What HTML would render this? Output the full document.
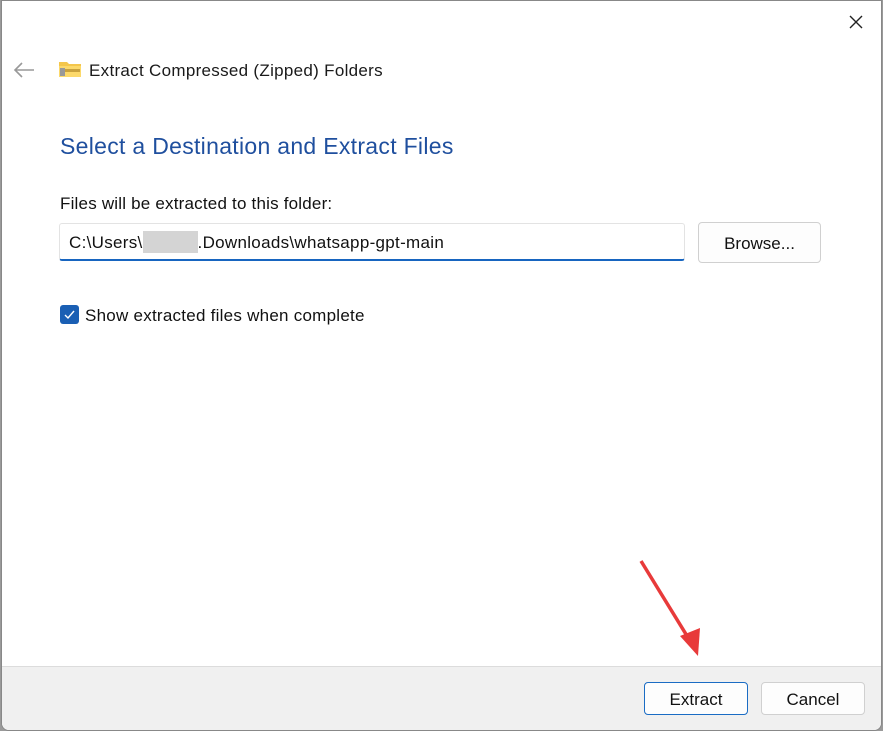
<!DOCTYPE html>
<html><head><style>
body{margin:0;width:883px;height:731px;background:#9a9a9a;position:relative;overflow:hidden;font-family:"Liberation Sans",sans-serif;}
.win{position:absolute;left:1px;top:0;width:879px;height:729px;background:#fff;border:1px solid #888;border-radius:0 0 8px 8px;overflow:hidden;}
.t{position:absolute;white-space:nowrap;}
.foot{position:absolute;left:0;top:665px;width:879px;height:64px;background:#f0f0f0;border-top:1px solid #dcdcdc;}
.btn{position:absolute;height:31px;border:1px solid #d0d0d0;border-radius:4px;background:#fdfdfd;font-size:17px;text-align:center;line-height:31px;color:#111;}
</style></head><body>
<div class="win">
<svg style="position:absolute;left:846px;top:13px" width="16" height="16"><path d="M2 2L14 14M14 2L2 14" stroke="#222" stroke-width="1.4"/></svg>
<svg style="position:absolute;left:11px;top:61px" width="22" height="16"><path d="M21 8H2M9 1L2 8L9 15" stroke="#999" stroke-width="1.6" fill="none"/></svg>
<svg style="position:absolute;left:56px;top:59px" width="24" height="18"><path d="M1 2h8l2 2h12v13H1z" fill="#f4c64b"/><rect x="1" y="6" width="22" height="11" fill="#fcd96b"/><rect x="6" y="9" width="16" height="3" fill="#c9a23d"/><rect x="2" y="8" width="5" height="8" fill="#999"/></svg>
<div class="t" style="left:87px;top:60px;font-size:17px;letter-spacing:0.3px;color:#1a1a1a">Extract Compressed (Zipped) Folders</div>
<div class="t" style="left:58px;top:132px;font-size:23px;letter-spacing:0.3px;color:#1f4f9e">Select a Destination and Extract Files</div>
<div class="t" style="left:58px;top:193px;font-size:17px;letter-spacing:0.2px;color:#111">Files will be extracted to this folder:</div>
<div style="position:absolute;left:57px;top:222px;width:624px;height:35px;border:1px solid #e3e3e3;border-bottom:2px solid #1765c0;border-radius:3px"></div>
<div class="t" style="left:67px;top:230px;font-size:17px;letter-spacing:0.3px;color:#111">C:\Users\<span style="display:inline-block;width:55px;height:22px;background:#d4d4d4;vertical-align:-5px"></span>.Downloads\whatsapp-gpt-main</div>
<div class="btn" style="left:696px;top:221px;width:121px;height:39px;line-height:41px;">Browse...</div>
<div style="position:absolute;left:58px;top:304px;width:19px;height:19px;background:#1a5fb4;border-radius:3px"></div>
<svg style="position:absolute;left:58px;top:304px" width="19" height="19"><path d="M5 10l3 3 6-7" stroke="#fff" stroke-width="1.4" fill="none"/></svg>
<div class="t" style="left:83px;top:305px;font-size:17px;letter-spacing:0.25px;color:#111">Show extracted files when complete</div>
<div class="foot"></div>
<div class="btn" style="left:642px;top:681px;width:102px;border-color:#1a6cc4;line-height:33px">Extract</div>
<div class="btn" style="left:759px;top:681px;width:102px;line-height:33px">Cancel</div>
<svg style="position:absolute;left:630px;top:555px" width="80" height="110"><path d="M9 5L60 88" stroke="#e83a3a" stroke-width="3.5"/><path d="M66 100L48 80L68 72z" fill="#e83a3a"/></svg>
</div>
</body></html>
